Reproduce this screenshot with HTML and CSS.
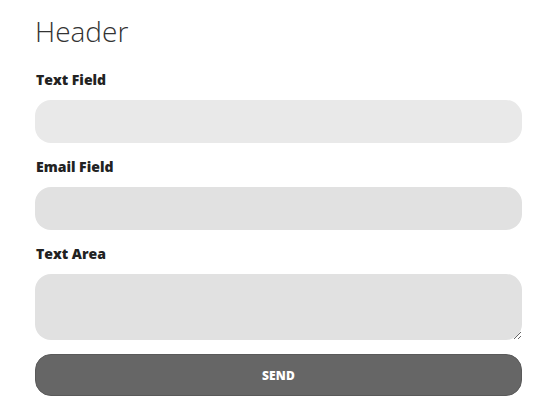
FILE: index.html
```html
<!DOCTYPE html>
<html>
<head>
<meta charset="utf-8">
<link rel="stylesheet" href="styles.css">
</head>
<body>
<main class="page">
  <h1 class="title">Header</h1>
  <form class="form">
    <label class="field">
      <span class="label">Text Field</span>
      <input class="input input-light" type="text">
    </label>
    <label class="field">
      <span class="label">Email Field</span>
      <input class="input" type="email">
    </label>
    <label class="field">
      <span class="label">Text Area</span>
      <textarea class="input area"></textarea>
    </label>
    <button class="send" type="button">SEND</button>
  </form>
</main>
</body>
</html>
```
FILE: styles.css
```css
html, body {
  margin: 0;
  padding: 0;
  background: #ffffff;
}
.page {
  width: 487px;
  padding: 12px 0 0 35px;
  font-family: "Open Sans", "Liberation Sans", sans-serif;
  color: #222;
}
.title {
  margin: 0;
  font-family: "Open Sans", sans-serif;
  font-weight: 300;
  font-size: 28px;
  line-height: 38px;
  color: #333;
}
.form {
  display: flex;
  flex-direction: column;
  margin-top: 20px;
}
.field {
  display: flex;
  flex-direction: column;
  margin-bottom: 14px;
}
.label {
  font-family: "Open Sans", sans-serif;
  font-weight: 800;
  font-size: 14px;
  line-height: 20px;
  margin: 0 0 10px 1px;
  color: #222;
}
.input {
  box-sizing: border-box;
  display: block;
  width: 487px;
  height: 43px;
  border: 0;
  border-radius: 16px;
  background: #e1e1e1;
  margin: 0;
  padding: 8px 16px;
  font: inherit;
  outline: none;
}
.input-light {
  background: #e9e9e9;
}
.area {
  height: 66px;
  resize: vertical;
}
.send {
  box-sizing: border-box;
  width: 487px;
  height: 42px;
  border: 1px solid #5a5a5a;
  border-radius: 16px;
  background: #666666;
  color: #ffffff;
  font-family: "Open Sans", sans-serif;
  font-weight: 800;
  font-size: 12px;
  letter-spacing: 0.2px;
}
```
